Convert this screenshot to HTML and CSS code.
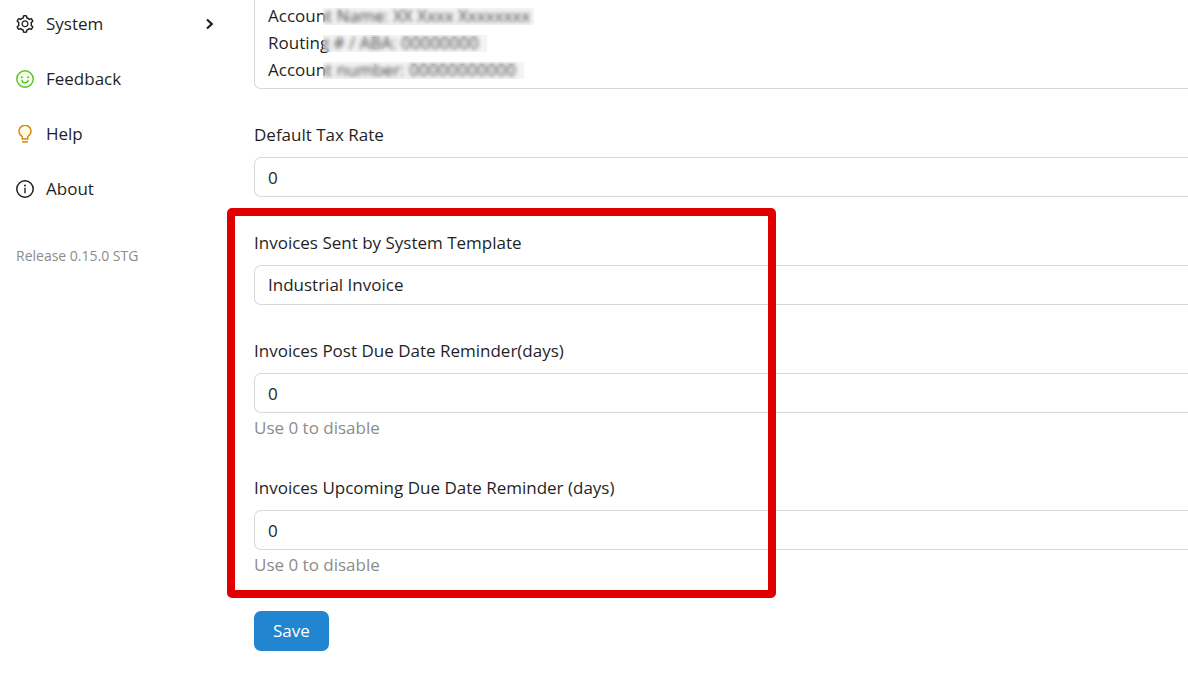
FILE: index.html
```
<!DOCTYPE html>
<html lang="en">
<head>
    <meta charset="UTF-8">
    <meta name="viewport" content="width=device-width, initial-scale=1.0">
    <title>Invoice Settings</title>
    <link rel="stylesheet" href="styles.css">
</head>
<body>
    <div class="layout">
        <aside class="sidebar">
            <nav class="menu">
                <a href="#" class="menu-item">
                    <svg class="icon" viewBox="64 64 896 896" fill="currentColor" aria-hidden="true">
                        <path d="M924.8 625.7l-65.5-56c3.1-19 4.7-38.4 4.7-57.8s-1.6-38.8-4.7-57.8l65.5-56a32.03 32.03 0 009.3-35.2l-.9-2.6a443.74 443.74 0 00-79.7-137.9l-1.8-2.1a32.12 32.12 0 00-35.1-9.5l-81.3 28.9c-30-24.6-63.5-44-99.7-57.6l-15.7-85a32.05 32.05 0 00-25.8-25.7l-2.7-.5c-52.1-9.4-106.9-9.4-159 0l-2.7.5a32.05 32.05 0 00-25.8 25.7l-15.8 85.4a351.86 351.86 0 00-99 57.4l-81.9-29.1a32 32 0 00-35.1 9.5l-1.8 2.1a446.02 446.02 0 00-79.7 137.9l-.9 2.6c-4.5 12.5-.8 26.5 9.3 35.2l66.3 56.6c-3.1 18.8-4.6 38-4.6 57.1 0 19.2 1.5 38.4 4.6 57.1L99 625.5a32.03 32.03 0 00-9.3 35.2l.9 2.6c18.1 50.4 44.9 96.9 79.7 137.9l1.8 2.1a32.12 32.12 0 0035.1 9.5l81.9-29.1c29.8 24.5 63.1 43.9 99 57.4l15.8 85.4a32.05 32.05 0 0025.8 25.7l2.7.5a449.4 449.4 0 00159 0l2.7-.5a32.05 32.05 0 0025.8-25.7l15.7-85a350 350 0 0099.7-57.6l81.3 28.9a32 32 0 0035.1-9.5l1.8-2.1c34.8-41.1 61.6-87.5 79.7-137.9l.9-2.6c4.5-12.3.8-26.3-9.3-35zM788.3 465.9c2.5 15.1 3.8 30.6 3.8 46.1s-1.3 31-3.8 46.1l-6.6 40.1 74.7 63.9a370.03 370.03 0 01-42.6 73.6L721 702.8l-31.4 25.8c-23.9 19.6-50.5 35-79.3 45.8l-38.1 14.3-17.9 97a377.5 377.5 0 01-85 0l-17.9-97.2-37.8-14.5c-28.5-10.8-55-26.2-78.7-45.7l-31.4-25.9-93.4 33.2c-17-22.9-31.2-47.6-42.6-73.6l75.5-64.5-6.5-40c-2.4-14.9-3.7-30.3-3.7-45.5 0-15.3 1.2-30.6 3.7-45.5l6.5-40-75.5-64.5c11.3-26.1 25.6-50.7 42.6-73.6l93.4 33.2 31.4-25.9c23.7-19.5 50.2-34.9 78.7-45.7l37.9-14.3 17.9-97.2c28.1-3.2 56.8-3.2 85 0l17.9 97 38.1 14.3c28.7 10.8 55.4 26.2 79.3 45.8l31.4 25.8 92.8-32.9c17 22.9 31.2 47.6 42.6 73.6L781.8 426l6.5 39.9z"/>
                        <path d="M512 326c-97.2 0-176 78.8-176 176s78.8 176 176 176 176-78.8 176-176-78.8-176-176-176zm79.2 255.2A111.6 111.6 0 01512 614c-29.9 0-58-11.7-79.2-32.8A111.6 111.6 0 01400 502c0-29.9 11.7-58 32.8-79.2C454 401.6 482.1 390 512 390c29.9 0 58 11.6 79.2 32.8A111.6 111.6 0 01624 502c0 29.9-11.7 58-32.8 79.2z"/>
                    </svg>
                    <span>System</span>
                    <svg class="arrow" viewBox="0 0 12 12" aria-hidden="true">
                        <path d="M3 1.5L7.8 6L3 10.5" fill="none" stroke="currentColor" stroke-width="2.2"/>
                    </svg>
                </a>
                <a href="#" class="menu-item">
                    <svg class="icon icon-green" viewBox="0 0 18 18" aria-hidden="true">
                        <circle cx="9" cy="9" r="8.2" fill="#f6ffed" stroke="currentColor" stroke-width="1.4"/>
                        <circle cx="5.9" cy="7.2" r="1" fill="currentColor"/>
                        <circle cx="12.1" cy="7.2" r="1" fill="currentColor"/>
                        <path d="M5.9 9.8a3.1 3 0 006.2 0" fill="none" stroke="currentColor" stroke-width="1.3"/>
                    </svg>
                    <span>Feedback</span>
                </a>
                <a href="#" class="menu-item">
                    <svg class="icon icon-gold" viewBox="0 0 18 18" aria-hidden="true">
                        <path d="M6.3 14v-2.4a6 6 0 115.4 0V14z" fill="#fffbe6" stroke="currentColor" stroke-width="1.4"/>
                        <path d="M6 16.9h6" stroke="currentColor" stroke-width="1.5"/>
                    </svg>
                    <span>Help</span>
                </a>
                <a href="#" class="menu-item">
                    <svg class="icon" viewBox="0 0 18 18" aria-hidden="true">
                        <circle cx="9" cy="9" r="8.2" fill="none" stroke="currentColor" stroke-width="1.5"/>
                        <circle cx="9" cy="5.5" r="1" fill="currentColor"/>
                        <path d="M9 7.8v5.5" stroke="currentColor" stroke-width="1.4"/>
                    </svg>
                    <span>About</span>
                </a>
            </nav>
            <p class="release">Release 0.15.0 STG</p>
        </aside>

        <main class="content">
            <form class="form">
                <div class="bank">
                    <textarea class="control bank-text" rows="3" aria-label="Bank details">Account Name: XX Xxxx Xxxxxxxx
Routing # / ABA: 00000000
Account number: 00000000000</textarea>
                    <span class="mask mask-name"></span>
                    <span class="mask mask-routing"></span>
                    <span class="mask mask-number"></span>
                </div>

                <div class="field">
                    <label for="tax">Default Tax Rate</label>
                    <input class="control" id="tax" type="text" value="0">
                </div>

                <div class="highlight">
                    <div class="field">
                        <label for="template">Invoices Sent by System Template</label>
                        <select class="control" id="template">
                            <option>Industrial Invoice</option>
                        </select>
                    </div>
                    <div class="field">
                        <label for="post-due">Invoices Post Due Date Reminder(days)</label>
                        <input class="control" id="post-due" type="text" value="0">
                        <small class="hint">Use 0 to disable</small>
                    </div>
                    <div class="field">
                        <label for="upcoming">Invoices Upcoming Due Date Reminder (days)</label>
                        <input class="control" id="upcoming" type="text" value="0">
                        <small class="hint">Use 0 to disable</small>
                    </div>
                </div>

                <button type="button" class="save">Save</button>
            </form>
        </main>
    </div>
</body>
</html>
```
FILE: styles.css
```
*,
*::after {
    box-sizing: border-box;
}

body {
    margin: 0;
    background: #fff;
    color: #1f1f1f;
    font-family: "Open Sans", "Noto Sans", sans-serif;
    font-size: 17px;
    line-height: 28px;
}

.layout {
    display: flex;
}

.sidebar {
    width: 230px;
    flex-shrink: 0;
    padding: 0 14px 0 16px;
}

.menu {
    display: flex;
    flex-direction: column;
    gap: 8px;
}

.menu-item {
    display: flex;
    align-items: center;
    gap: 12px;
    height: 47px;
    color: inherit;
    text-decoration: none;
}

.icon {
    width: 18px;
    height: 18px;
}

.icon-green {
    color: #52c41a;
}

.icon-gold {
    color: #d48806;
}

.arrow {
    width: 12px;
    height: 12px;
    margin-left: auto;
}

.release {
    margin: 30px 0 0;
    color: #8c8c8c;
    font-size: 14px;
}

.content {
    flex: 1;
    min-width: 0;
    padding-left: 24px;
}

.form {
    display: flex;
    flex-direction: column;
    align-items: stretch;
    gap: 32px;
}

.field {
    display: flex;
    flex-direction: column;
}

.field label {
    margin-bottom: 8px;
}

.control {
    display: block;
    width: 100%;
    height: 40px;
    margin: 0;
    padding: 0 13px;
    border: 1px solid #d9d9d9;
    border-right: 0;
    border-radius: 7px 0 0 7px;
    background: #fff;
    color: inherit;
    font: inherit;
    appearance: none;
    outline: none;
}

.hint {
    color: #8c8c8c;
    font-size: 17px;
    line-height: 29px;
}

.bank {
    position: relative;
}

.bank-text {
    height: auto;
    padding: 2px 13px 5px;
    border-top: 0;
    border-radius: 0 0 0 7px;
    line-height: 27px;
    resize: none;
    overflow: hidden;
}

/* hides the bank account values */
.mask {
    position: absolute;
    left: 69px;
    height: 17px;
    background: rgba(200, 200, 200, 0.2);
    backdrop-filter: blur(2px);
}

.mask-name {
    top: 8px;
    width: 211px;
}

.mask-routing {
    top: 35px;
    width: 164px;
}

.mask-number {
    top: 62px;
    width: 201px;
}

.highlight {
    position: relative;
    display: flex;
    flex-direction: column;
    gap: 32px;
}

.highlight::after {
    content: '';
    position: absolute;
    top: -21px;
    bottom: -19px;
    left: -27px;
    width: 549px;
    border: 8px solid #e00000;
    border-radius: 5px;
    pointer-events: none;
}

.save {
    align-self: flex-start;
    height: 40px;
    padding: 0 19px;
    border: 0;
    border-radius: 7px;
    background: #2185d0;
    color: #fff;
    font: inherit;
}
```
